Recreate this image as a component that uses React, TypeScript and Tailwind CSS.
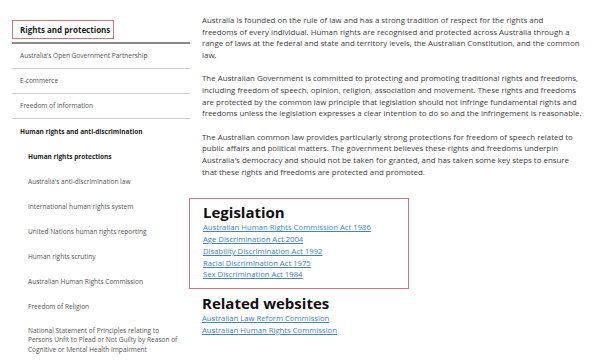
import React from 'react';

const sideTop = [
  "Australia's Open Government Partnership",
  'E-commerce',
  'Freedom of information',
];

const sideNested = [
  "Australia's anti-discrimination law",
  'International human rights system',
  'United Nations human rights reporting',
  'Human rights scrutiny',
  'Australian Human Rights Commission',
  'Freedom of Religion',
];

const legislation = [
  'Australian Human Rights Commission Act 1986',
  'Age Discrimination Act 2004',
  'Disability Discrimination Act 1992',
  'Racial Discrimination Act 1975',
  'Sex Discrimination Act 1984',
];

const related = ['Australian Law Reform Commission', 'Australian Human Rights Commission'];

export default function App() {
  return (
    <div className="w-[600px] h-[362px] overflow-hidden bg-white flex font-['Open_Sans',sans-serif]">
      {/* sidebar */}
      <aside className="w-[178px] ml-[12px] pt-[20px] shrink-0">
        <div className="w-[102px] h-[19px] border border-[#d9737b] flex items-center pl-[7px] text-[8px] font-bold text-[#222]">
          Rights and protections
        </div>
        <div className="mt-[3px] border-t-2 border-[#8a8a8a]" />
        {sideTop.map((item) => (
          <div key={item} className="h-[25px] flex items-center pl-[8px] border-b border-[#cfcfcf] text-[6.55px] text-[#555]">
            {item}
          </div>
        ))}
        <div className="h-[25px] flex items-center pl-[8px] text-[6.5px] font-bold text-[#222]">
          Human rights and anti-discrimination
        </div>
        <div className="h-[25px] flex items-center pl-[16px] text-[6.5px] font-bold text-[#222]">
          Human rights protections
        </div>
        {sideNested.map((item) => (
          <div key={item} className="h-[25px] flex items-center pl-[16px] text-[6.55px] text-[#555]">
            {item}
          </div>
        ))}
        <div className="pl-[16px] pt-[7px] text-[6.55px] leading-[9.3px] text-[#555]">
          National Statement of Principles relating to
          <br />
          Persons Unfit to Plead or Not Guilty by Reason of
          <br />
          Cognitive or Mental Health Impairment
        </div>
      </aside>

      {/* main content */}
      <main className="flex-1 pt-[15px] text-[7.9px] leading-[11.7px] text-[#3d3d3d]">
        <div className="pl-[12px] flex flex-col gap-[11.5px]">
          <p>
            Australia is founded on the rule of law and has a strong tradition of respect for the rights and
            <br />
            freedoms of every individual. Human rights are recognised and protected across Australia through a
            <br />
            range of laws at the federal and state and territory levels, the Australian Constitution, and the common
            <br />
            law.
          </p>
          <p>
            The Australian Government is committed to protecting and promoting traditional rights and freedoms,
            <br />
            including freedom of speech, opinion, religion, association and movement. These rights and freedoms
            <br />
            are protected by the common law principle that legislation should not infringe fundamental rights and
            <br />
            freedoms unless the legislation expresses a clear intention to do so and the infringement is reasonable.
          </p>
          <p>
            The Australian common law provides particularly strong protections for freedom of speech related to
            <br />
            public affairs and political matters. The government believes these rights and freedoms underpin
            <br />
            Australia's democracy and should not be taken for granted, and has taken some key steps to ensure
            <br />
            that these rights and freedoms are protected and promoted.
          </p>
        </div>

        <section className="mt-[20px] ml-[-1px] w-[220px] border border-[#d9737b] pl-[13px] pt-[4px] pb-[7px] text-[7.7px]">
          <h2 className="text-[15px] leading-[19px] font-bold text-[#111]">Legislation</h2>
          <ul>
            {legislation.map((l) => (
              <li key={l}>
                <a href="#" className="text-[#4383c4] underline underline-offset-1">
                  {l}
                </a>
              </li>
            ))}
          </ul>
        </section>

        <section className="pl-[12px] pt-[5px] text-[7.7px]">
          <h2 className="text-[15px] leading-[19px] font-bold text-[#111]">Related websites</h2>
          <ul>
            {related.map((l) => (
              <li key={l}>
                <a href="#" className="text-[#4383c4] underline underline-offset-1">
                  {l}
                </a>
              </li>
            ))}
          </ul>
        </section>
      </main>
    </div>
  );
}
